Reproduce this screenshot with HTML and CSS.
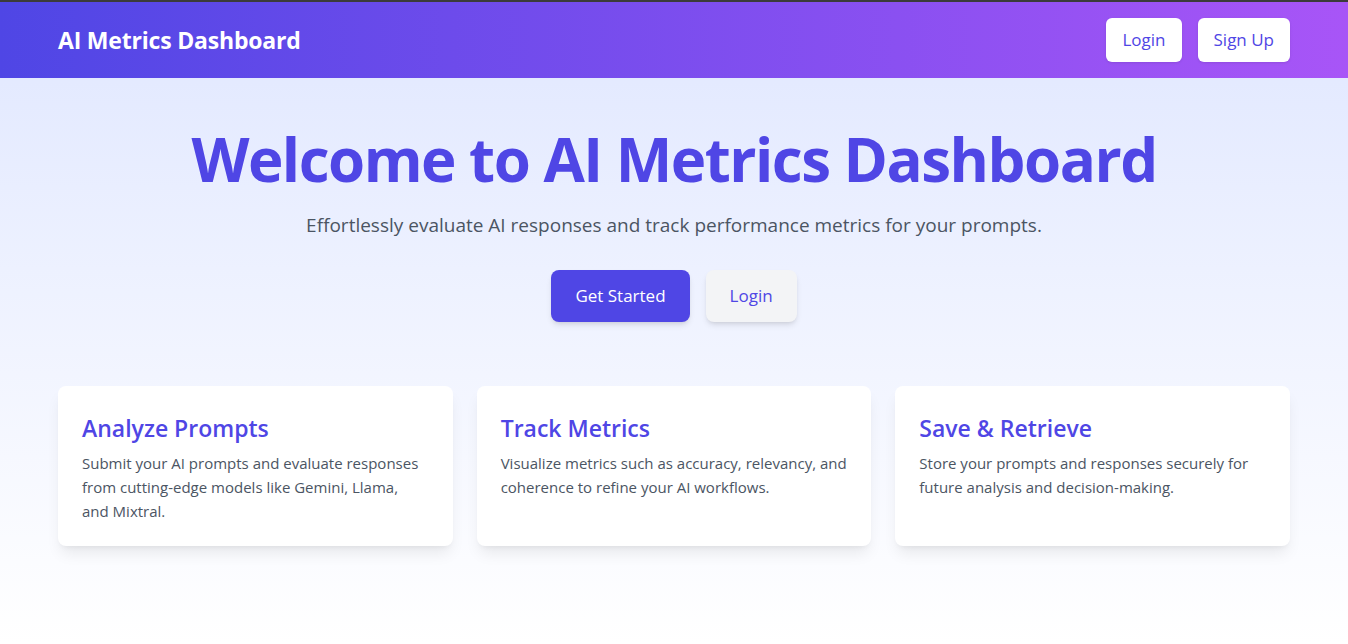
FILE: index.html
```html
<!DOCTYPE html>
<html lang="en">
<head>
<meta charset="utf-8">
<title>AI Metrics Dashboard</title>
<link rel="stylesheet" href="styles.css">
</head>
<body>
<div class="page">
  <header class="topbar">
    <div class="container topbar-inner">
      <h1 class="brand">AI Metrics Dashboard</h1>
      <nav class="nav">
        <a class="nav-btn" href="#">Login</a>
        <a class="nav-btn" href="#">Sign Up</a>
      </nav>
    </div>
  </header>
  <main class="container">
    <section class="hero">
      <h2 class="hero-title">Welcome to AI Metrics Dashboard</h2>
      <p class="hero-sub">Effortlessly evaluate AI responses and track performance metrics for your prompts.</p>
      <div class="hero-actions">
        <a class="btn btn-primary" href="#">Get Started</a>
        <a class="btn btn-light" href="#">Login</a>
      </div>
    </section>
    <section class="features">
      <div class="card">
        <h3 class="card-title">Analyze Prompts</h3>
        <p class="card-text">Submit your AI prompts and evaluate responses from cutting-edge models like Gemini, Llama, and Mixtral.</p>
      </div>
      <div class="card">
        <h3 class="card-title">Track Metrics</h3>
        <p class="card-text">Visualize metrics such as accuracy, relevancy, and coherence to refine your AI workflows.</p>
      </div>
      <div class="card">
        <h3 class="card-title">Save &amp; Retrieve</h3>
        <p class="card-text">Store your prompts and responses securely for future analysis and decision-making.</p>
      </div>
    </section>
  </main>
</div>
</body>
</html>
```
FILE: styles.css
```css
* { box-sizing: border-box; }
html, body { margin: 0; padding: 0; }
body {
  font-family: "Open Sans", "Noto Sans", sans-serif;
  color: #1f2937;
}
.page {
  min-height: 644px;
  background: linear-gradient(to bottom, #e0e7ff 0%, #ffffff 100%);
}
.container {
  max-width: 1280px;
  margin: 0 auto;
  padding: 0 24px;
}
.topbar {
  border-top: 2px solid #3b3b3b;
  background: linear-gradient(to right, #4f46e5, #a855f7);
  height: 78px;
}
.topbar-inner {
  height: 76px;
  display: flex;
  align-items: center;
  justify-content: space-between;
}
.brand {
  margin: 0;
  color: #fff;
  font-size: 23px;
  font-weight: 700;
  letter-spacing: -0.2px;
}
.nav { display: flex; gap: 16px; }
.nav-btn {
  display: block;
  background: #fff;
  color: #4f46e5;
  text-decoration: none;
  font-size: 17px;
  line-height: 28px;
  padding: 8px 16px;
  border-radius: 6px;
  box-shadow: 0 1px 3px rgba(0,0,0,0.1);
}
.hero {
  text-align: center;
  padding-top: 45px;
}
.hero-title {
  margin: 0;
  color: #4f46e5;
  font-size: 60px;
  line-height: 72px;
  font-weight: 700;
  letter-spacing: -1.5px;
}
.hero-sub {
  margin: 16px 0 0;
  font-size: 19px;
  line-height: 28px;
  color: #4b5563;
}
.hero-actions {
  margin-top: 31px;
  display: flex;
  justify-content: center;
  gap: 16px;
}
.btn {
  display: block;
  text-decoration: none;
  font-size: 17px;
  line-height: 28px;
  padding: 12px 24px;
  border-radius: 8px;
  box-shadow: 0 4px 6px -1px rgba(0,0,0,0.1), 0 2px 4px -2px rgba(0,0,0,0.1);
}
.btn-primary { background: #4f46e5; color: #fff; }
.btn-light { background: #f3f4f6; color: #4f46e5; }
.features {
  margin-top: 64px;
  display: grid;
  grid-template-columns: repeat(3, 1fr);
  gap: 24px;
}
.card {
  background: #fff;
  border-radius: 8px;
  padding: 26px 24.5px 24px 24px;
  height: 160px;
  box-shadow: 0 10px 15px -3px rgba(0,0,0,0.08), 0 4px 6px -4px rgba(0,0,0,0.08);
}
.card-title {
  margin: 0;
  color: #4f46e5;
  font-size: 23px;
  line-height: 32px;
  font-weight: 600;
}
.card-text {
  margin: 7px 0 0;
  font-size: 15px;
  line-height: 24px;
  color: #4b5563;
}
```
